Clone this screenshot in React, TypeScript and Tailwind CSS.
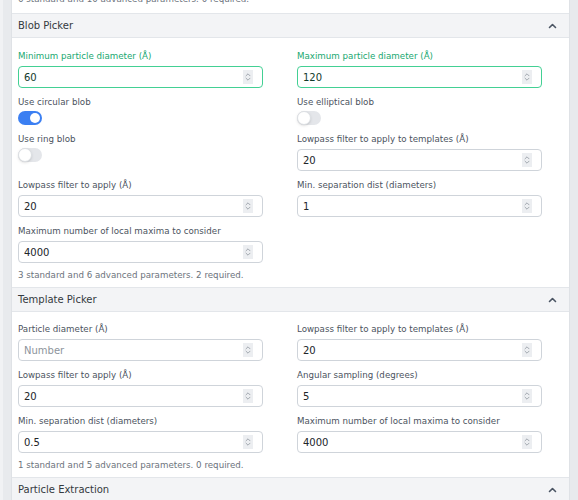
import React from 'react'

type Field =
  | { kind: 'number'; label: string; value?: string; placeholder?: string; active?: boolean }
  | { kind: 'toggle'; label: string; on: boolean }
  | { kind: 'empty' }

type Section = { title: string; fields: Field[]; summary: string; tight?: boolean }

const sections: Section[] = [
  {
    title: 'Blob Picker',
    fields: [
      { kind: 'number', label: 'Minimum particle diameter (Å)', value: '60', active: true },
      { kind: 'number', label: 'Maximum particle diameter (Å)', value: '120', active: true },
      { kind: 'toggle', label: 'Use circular blob', on: true },
      { kind: 'toggle', label: 'Use elliptical blob', on: false },
      { kind: 'toggle', label: 'Use ring blob', on: false },
      { kind: 'number', label: 'Lowpass filter to apply to templates (Å)', value: '20' },
      { kind: 'number', label: 'Lowpass filter to apply (Å)', value: '20' },
      { kind: 'number', label: 'Min. separation dist (diameters)', value: '1' },
      { kind: 'number', label: 'Maximum number of local maxima to consider', value: '4000' },
      { kind: 'empty' },
    ],
    summary: '3 standard and 6 advanced parameters. 2 required.',
  },
  {
    title: 'Template Picker',
    tight: true,
    fields: [
      { kind: 'number', label: 'Particle diameter (Å)', placeholder: 'Number' },
      { kind: 'number', label: 'Lowpass filter to apply to templates (Å)', value: '20' },
      { kind: 'number', label: 'Lowpass filter to apply (Å)', value: '20' },
      { kind: 'number', label: 'Angular sampling (degrees)', value: '5' },
      { kind: 'number', label: 'Min. separation dist (diameters)', value: '0.5' },
      { kind: 'number', label: 'Maximum number of local maxima to consider', value: '4000' },
    ],
    summary: '1 standard and 5 advanced parameters. 0 required.',
  },
]

function ChevronUp() {
  return (
    <svg width="9" height="6" viewBox="0 0 9 6" fill="none" stroke="#4b5563" strokeWidth="1.6" strokeLinecap="round" strokeLinejoin="round">
      <path d="M1.5 4.5 L4.5 1.5 L7.5 4.5" />
    </svg>
  )
}

function Spinner() {
  return (
    <div className="w-[10px] h-[14px] bg-[#eceef1] flex items-center justify-center">
      <svg width="6" height="10" viewBox="0 0 6 10" fill="none" stroke="#9aa0a8" strokeWidth="0.9" strokeLinecap="round" strokeLinejoin="round">
        <path d="M1 3.8 L3 1.8 L5 3.8" />
        <path d="M1 6.2 L3 8.2 L5 6.2" />
      </svg>
    </div>
  )
}

function Toggle({ on }: { on: boolean }) {
  return (
    <div
      className={
        on
          ? 'w-[24px] h-[14px] rounded-full bg-[#3b7ff2] flex items-center justify-end px-[2px]'
          : 'w-[24px] h-[14px] rounded-full bg-[#e4e6ea] flex items-center justify-start'
      }
    >
      <div
        className={
          on
            ? 'w-[10px] h-[10px] rounded-full bg-white'
            : 'w-[14px] h-[14px] rounded-full bg-white border border-[#dcdfe3] shadow-sm'
        }
      />
    </div>
  )
}

function FieldView({ field }: { field: Field }) {
  if (field.kind === 'empty') return <div />

  if (field.kind === 'toggle') {
    return (
      <div className="flex flex-col items-start">
        <div className="h-[12px] leading-[12px] text-[8.7px] text-[#4b5360] mb-[3px]">{field.label}</div>
        <Toggle on={field.on} />
      </div>
    )
  }

  return (
    <div className="flex flex-col">
      <div
        className={
          field.active
            ? 'h-[12px] leading-[12px] text-[8.7px] text-[#17a870] mb-[4px]'
            : 'h-[12px] leading-[12px] text-[8.7px] text-[#4b5360] mb-[4px]'
        }
      >
        {field.label}
      </div>
      <div
        className={
          field.active
            ? 'h-[22px] rounded-[4px] border border-[#43d094] bg-white flex items-center pl-[5px] pr-[9px]'
            : 'h-[22px] rounded-[4px] border border-[#cfd4da] bg-white flex items-center pl-[5px] pr-[9px]'
        }
      >
        <input
          readOnly
          defaultValue={field.value}
          placeholder={field.placeholder}
          className={
            field.active
              ? 'flex-1 min-w-0 bg-transparent outline-none text-[10px] text-[#123b2c] placeholder:text-[#8d949c]'
              : 'flex-1 min-w-0 bg-transparent outline-none text-[10px] text-[#212529] placeholder:text-[#8d949c]'
          }
        />
        <Spinner />
      </div>
    </div>
  )
}

function SectionHeader({ title }: { title: string }) {
  return (
    <div className="h-[25px] border-y border-[#e3e6ea] bg-[#f3f4f6] flex items-center justify-between pl-[6px] pr-[12px]">
      <span className="text-[10px] text-[#343a40]">{title}</span>
      <ChevronUp />
    </div>
  )
}

function SectionView({ section }: { section: Section }) {
  return (
    <div>
      <SectionHeader title={section.title} />
      <div className={section.tight ? 'pt-[11px] pb-[6px] px-[6px]' : 'pt-[12px] pb-[6px] px-[6px]'}>
        <div className="grid grid-cols-[245px_245px] gap-x-[34px] gap-y-[8px] items-start">
          {section.fields.map((f, i) => (
            <FieldView key={i} field={f} />
          ))}
        </div>
        <div className="mt-[6px] h-[12px] leading-[12px] text-[8.7px] text-[#6c737c]">{section.summary}</div>
      </div>
    </div>
  )
}

export default function App() {
  return (
    <div
      className="w-[578px] h-[500px] overflow-hidden bg-[#e8eaed] flex"
      style={{ fontFamily: '"DejaVu Sans", sans-serif' }}
    >
      <div className="w-[11px] shrink-0 border-l-[3px] border-[#f1f2f4]" />
      <div className="w-[559px] shrink-0 bg-white border-x border-[#dfe2e6] -mt-[7px]">
        {/* tail of the previous panel */}
        <div className="px-[6px] pb-[8px] h-[20px] flex items-end">
          <div className="h-[12px] leading-[12px] text-[8.7px] text-[#6c737c]">
            6 standard and 10 advanced parameters. 0 required.
          </div>
        </div>
        {sections.map((s) => (
          <SectionView key={s.title} section={s} />
        ))}
        <SectionHeader title="Particle Extraction" />
        <div className="h-[40px]" />
      </div>
    </div>
  )
}
